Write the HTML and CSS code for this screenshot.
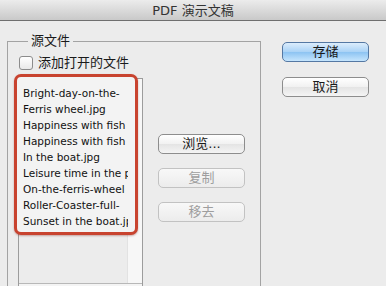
FILE: index.html
```html
<!DOCTYPE html>
<html lang="zh-CN">
<head>
    <meta charset="UTF-8">
    <title>PDF 演示文稿</title>
    <link rel="stylesheet" href="styles.css">
</head>
<body>

    <div class="titlebar">PDF 演示文稿</div>

    <div class="dialog">
        <fieldset class="group">
            <legend>源文件</legend>

            <label class="check-row">
                <span class="checkbox"></span>
                添加打开的文件
            </label>

            <div class="files">
                <div class="listbox">
                    <div class="scrollbar"></div>
                    <div class="picked">
                        <ul class="items">
                            <li>Bright-day-on-the-</li>
                            <li>Ferris wheel.jpg</li>
                            <li>Happiness with fish</li>
                            <li>Happiness with fish</li>
                            <li>In the boat.jpg</li>
                            <li>Leisure time in the park</li>
                            <li>On-the-ferris-wheel</li>
                            <li>Roller-Coaster-full-</li>
                            <li>Sunset in the boat.jpg</li>
                        </ul>
                    </div>
                    <div class="hscroll"></div>
                </div>

                <div class="side-buttons">
                    <button class="btn">浏览...</button>
                    <button class="btn" disabled>复制</button>
                    <button class="btn" disabled>移去</button>
                </div>
            </div>
        </fieldset>

        <div class="actions">
            <button class="btn primary">存储</button>
            <button class="btn">取消</button>
        </div>
    </div>

</body>
</html>
```

FILE: styles.css
```css
/* General */
body {
    margin: 0;
    background: #ececec;
    font-family: "DejaVu Sans", "Noto Sans CJK SC", sans-serif;
    color: #1a1a1a;
    height: 286px;
    overflow: hidden;
}

/* Window title */
.titlebar {
    height: 20px;
    line-height: 22px;
    text-align: center;
    font-size: 13px;
    color: #333;
    background: linear-gradient(#ececec, #c9c9c9);
    border-bottom: 1px solid #6f6f6f;
}

.dialog {
    display: flex;
    align-items: flex-start;
}

/* Source group */
.group {
    margin: 13px 0 0 7px;
    padding: 0 0 0 10px;
    width: 242px;
    height: 251px;
    border: 1px solid #a3a3a3;
    border-bottom: none;
}

.group legend {
    margin-left: 10px;
    padding: 0 3px;
    font-size: 13px;
    line-height: 14px;
}

.check-row {
    display: flex;
    align-items: center;
    gap: 5px;
    margin-top: 8px;
    font-size: 13px;
    line-height: 14px;
}

.checkbox {
    width: 12px;
    height: 12px;
    margin-left: 1px;
    border: 1px solid #8c8c8c;
    border-radius: 3px;
    background: linear-gradient(#ffffff, #e9e9e9);
}

.files {
    display: flex;
    gap: 15px;
    margin-top: 8px;
}

/* File list */
.listbox {
    position: relative;
    width: 123px;
    height: 208px;
    border: 1px solid #9c9c9c;
    border-bottom: none;
    background: #ececec;
}

.scrollbar {
    position: absolute;
    top: 0;
    right: 0;
    width: 14px;
    height: 100%;
    background: #f7f7f7;
    border-left: 1px solid #e2e2e2;
}

.hscroll {
    position: absolute;
    left: 0;
    right: 0;
    top: 204px;
    height: 4px;
    border-top: 1px solid #b8b8b8;
    background: #f4f4f4;
}

.picked {
    position: relative;
    z-index: 1;
    margin: -5px 0 0 -5px;
    width: 118px;
    border: 3px solid #c8432f;
    border-radius: 7px;
    background: #f3f3f3;
    box-shadow: 0 1px 2px rgba(120, 30, 20, 0.35);
}

.items {
    list-style: none;
    margin: 0;
    padding: 8px 0 3px 6px;
    width: 105px;
    overflow: hidden;
    white-space: nowrap;
    font-size: 10.5px;
    line-height: 16px;
    color: #111;
}

/* Buttons */
.btn {
    display: block;
    width: 87px;
    height: 20px;
    padding: 0;
    font-family: "DejaVu Sans", "Noto Sans CJK SC", sans-serif;
    font-size: 13px;
    line-height: 18px;
    color: #1a1a1a;
    border: 1px solid #8d8d8d;
    border-radius: 5px;
    background: linear-gradient(#ffffff, #f1f1f1 50%, #e4e4e4 51%, #f4f4f4);
}

.btn:disabled {
    color: #9e9e9e;
    border-color: #c2c2c2;
    background: linear-gradient(#f8f8f8, #ececec);
}

.side-buttons {
    display: flex;
    flex-direction: column;
    gap: 14px;
    margin-top: 56px;
}

.actions {
    display: flex;
    flex-direction: column;
    gap: 15px;
    margin: 21px 0 0 21px;
}

.btn.primary {
    border-color: #5578a3;
    background: linear-gradient(#dcedfc, #a9d2f6 50%, #8cc3f2 51%, #c6e5fd);
}
```
